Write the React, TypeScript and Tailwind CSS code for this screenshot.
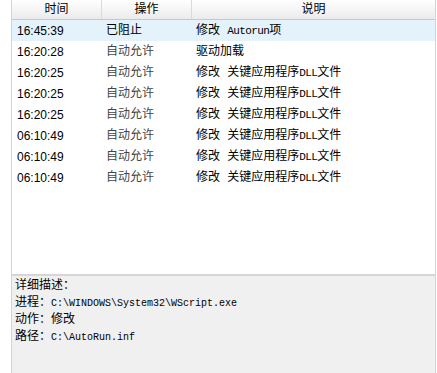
const rows = [
  { time: "16:45:39", action: "已阻止", desc: ["修改 ", "Autorun", "项"], blocked: true },
  { time: "16:20:28", action: "自动允许", desc: ["驱动加载"] },
  { time: "16:20:25", action: "自动允许", desc: ["修改 关键应用程序", "DLL", "文件"] },
  { time: "16:20:25", action: "自动允许", desc: ["修改 关键应用程序", "DLL", "文件"] },
  { time: "16:20:25", action: "自动允许", desc: ["修改 关键应用程序", "DLL", "文件"] },
  { time: "06:10:49", action: "自动允许", desc: ["修改 关键应用程序", "DLL", "文件"] },
  { time: "06:10:49", action: "自动允许", desc: ["修改 关键应用程序", "DLL", "文件"] },
  { time: "06:10:49", action: "自动允许", desc: ["修改 关键应用程序", "DLL", "文件"] },
];

const cjk = { fontFamily: '"Liberation Mono", "Noto Sans CJK SC", monospace' };

function Desc({ parts }: { parts: string[] }) {
  return (
    <>
      {parts.map((p, i) =>
        i % 2 === 1 ? (
          <span key={i} className="text-[11px] tracking-[-0.6px]">
            {p}
          </span>
        ) : (
          <span key={i}>{p}</span>
        )
      )}
    </>
  );
}

export default function App() {
  return (
    <div className="w-[437px] h-[373px] bg-white flex pl-[11px] overflow-hidden" style={cjk}>
      <div className="flex flex-col w-[425px] h-full border-l border-r border-[#d4d4d4] text-[12px] text-black">
        {/* header */}
        <div className="flex h-[20px] border-b border-[#c8c8c8] bg-gradient-to-b from-white to-[#ebebeb] shrink-0">
          <div className="w-[90px] border-r border-[#dadada] flex items-center justify-center">时间</div>
          <div className="w-[90px] border-r border-[#dadada] flex items-center justify-center">操作</div>
          <div className="flex-1 flex items-center justify-center">说明</div>
        </div>

        {/* list */}
        <div className="flex-1 flex flex-col">
          {rows.map((r, i) => (
            <div key={i} className={`flex h-[21px] items-center ${r.blocked ? "bg-[#e4f2fb]" : ""}`}>
              <div className="w-[90px] pl-[5px] text-black" style={{ fontFamily: '"Liberation Sans", sans-serif' }}>
                {r.time}
              </div>
              <div className={`w-[90px] pl-[4px] ${r.blocked ? "text-black" : "text-[#444]"}`}>{r.action}</div>
              <div className="flex-1 pl-[4px] whitespace-nowrap">
                <Desc parts={r.desc} />
              </div>
            </div>
          ))}
        </div>

        {/* detail */}
        <div className="h-[99px] shrink-0 border-t-2 border-[#d6d6d6] bg-[#f0f0f0] pl-[3px] pt-[2px] leading-[17px]">
          <div>详细描述：</div>
          <div>
            进程：<span className="text-[10px]">C:\WINDOWS\System32\WScript.exe</span>
          </div>
          <div>动作：修改</div>
          <div>
            路径：<span className="text-[10px]">C:\AutoRun.inf</span>
          </div>
        </div>
      </div>
    </div>
  );
}
